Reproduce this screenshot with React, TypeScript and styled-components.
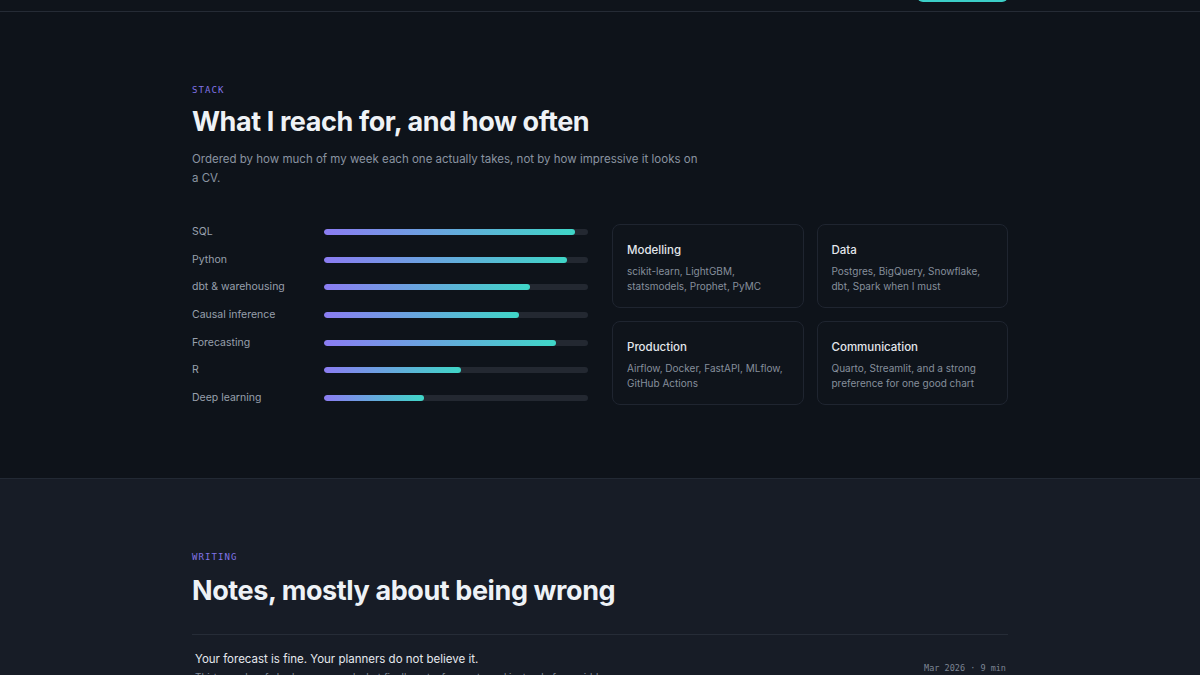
import { FC } from 'react'
import styled, { createGlobalStyle } from 'styled-components'

const GlobalStyle = createGlobalStyle`
  html, body {
    margin: 0;
    padding: 0;
    background: #0f141b;
  }
  body {
    font-family: 'Inter', 'Noto Sans', sans-serif;
    color: #e8ecf1;
    -webkit-font-smoothing: antialiased;
  }
  * {
    box-sizing: border-box;
  }
`

interface Skill {
  name: string
  level: number
}

interface Group {
  title: string
  tools: string
}

const skills: Skill[] = [
  { name: 'SQL', level: 95 },
  { name: 'Python', level: 92 },
  { name: 'dbt & warehousing', level: 78 },
  { name: 'Causal inference', level: 74 },
  { name: 'Forecasting', level: 88 },
  { name: 'R', level: 52 },
  { name: 'Deep learning', level: 38 }
]

const groups: Group[] = [
  { title: 'Modelling', tools: 'scikit-learn, LightGBM, statsmodels, Prophet, PyMC' },
  { title: 'Data', tools: 'Postgres, BigQuery, Snowflake, dbt, Spark when I must' },
  { title: 'Production', tools: 'Airflow, Docker, FastAPI, MLflow, GitHub Actions' },
  { title: 'Communication', tools: 'Quarto, Streamlit, and a strong preference for one good chart' }
]

const App: FC = () => {
  return (
    <>
      <GlobalStyle />
      <TopBar>
        <Container>
          <NavInner>
            <CtaButton>Get in touch</CtaButton>
          </NavInner>
        </Container>
      </TopBar>

      <Section $tone="dark">
        <Container>
          <Eyebrow>STACK</Eyebrow>
          <Heading $gap={9}>What I reach for, and how often</Heading>
          <Lead>
            Ordered by how much of my week each one actually takes, not by how impressive it looks on a CV.
          </Lead>

          <StackGrid>
            <SkillList>
              {skills.map((s) => (
                <SkillRow key={s.name}>
                  <SkillName>{s.name}</SkillName>
                  <Track>
                    <Fill style={{ width: `${s.level}%` }} />
                  </Track>
                </SkillRow>
              ))}
            </SkillList>

            <CardGrid>
              {groups.map((g) => (
                <Card key={g.title}>
                  <CardTitle>{g.title}</CardTitle>
                  <CardText>{g.tools}</CardText>
                </Card>
              ))}
            </CardGrid>
          </StackGrid>
        </Container>
      </Section>

      <Section $tone="light">
        <Container>
          <Eyebrow>WRITING</Eyebrow>
          <Heading $gap={11}>Notes, mostly about being wrong</Heading>
          <PostList>
            <Post>
              <PostBody>
                <PostTitle>Your forecast is fine. Your planners do not believe it.</PostTitle>
                <PostExcerpt>
                  Thirty weeks of shadow runs, and what finally got a forecast used instead of overridden.
                </PostExcerpt>
              </PostBody>
              <PostMeta>Mar 2026 · 9 min</PostMeta>
            </Post>
          </PostList>
        </Container>
      </Section>
    </>
  )
}

const Container = styled.div`
  width: 816px;
  margin: 0 auto;
`

const TopBar = styled.header`
  height: 12px;
  overflow: hidden;
  background: #0f141b;
  border-bottom: 1px solid #252b35;
`

const NavInner = styled.div`
  height: 11px;
  display: flex;
  justify-content: flex-end;
  align-items: flex-end;
`

const CtaButton = styled.button`
  flex-shrink: 0;
  width: 91px;
  height: 32px;
  margin-bottom: 9px;
  border: none;
  border-radius: 6px;
  background: #3ccfc8;
  color: #0f141b;
  font-family: 'Inter', sans-serif;
  font-size: 12px;
  font-weight: 600;
`

const Section = styled.section<{ $tone: 'dark' | 'light' }>`
  background: ${(p) => (p.$tone === 'dark' ? '#0e131a' : '#171c26')};
  padding: ${(p) => (p.$tone === 'dark' ? '72px 0 73px' : '72px 0 0')};
  border-bottom: ${(p) => (p.$tone === 'dark' ? '1px solid #222934' : 'none')};
`

const Eyebrow = styled.div`
  font-family: 'DejaVu Sans Mono', 'Liberation Mono', monospace;
  font-size: 9px;
  line-height: 12px;
  letter-spacing: 0.12em;
  color: #8174e6;
`

const Heading = styled.h2<{ $gap: number }>`
  margin: ${(p) => p.$gap}px 0 0;
  font-size: 27px;
  line-height: 34px;
  font-weight: 700;
  letter-spacing: -0.015em;
  color: #eef2f6;
`

const Lead = styled.p`
  margin: 11px 0 0;
  max-width: 510px;
  font-size: 11.5px;
  line-height: 19px;
  color: #8a93a1;
`

const StackGrid = styled.div`
  display: grid;
  grid-template-columns: 1fr 1fr;
  gap: 24px;
  margin-top: 36px;
`

const SkillList = styled.div`
  display: flex;
  flex-direction: column;
  gap: 13.7px;
  padding-top: 1px;
`

const SkillRow = styled.div`
  height: 14px;
  display: grid;
  grid-template-columns: 132px 1fr;
  align-items: center;
`

const SkillName = styled.span`
  font-size: 10.5px;
  line-height: 14px;
  color: #98a0ad;
`

const Track = styled.div`
  height: 6px;
  border-radius: 3px;
  background: #232831;
  overflow: hidden;
`

const Fill = styled.div`
  height: 100%;
  border-radius: 3px;
  background: linear-gradient(90deg, #8b7cf2 0%, #3fd6c7 100%);
`

const CardGrid = styled.div`
  display: grid;
  grid-template-columns: 1fr 1fr;
  grid-auto-rows: 84px;
  gap: 13px;
`

const Card = styled.div`
  padding: 16px 14px 14px;
  border: 1px solid #1f2530;
  border-radius: 8px;
  background: #0f141b;
`

const CardTitle = styled.div`
  font-size: 11.5px;
  line-height: 18px;
  font-weight: 500;
  color: #e3e7ec;
`

const CardText = styled.div`
  margin-top: 5px;
  font-size: 10px;
  line-height: 15px;
  color: #868f9c;
`

const PostList = styled.div`
  margin-top: 26px;
  border-top: 1px solid #262c37;
`

const Post = styled.article`
  display: flex;
  justify-content: space-between;
  align-items: flex-start;
  padding: 15px 2px 0 3px;
`

const PostBody = styled.div`
  display: flex;
  flex-direction: column;
`

const PostTitle = styled.div`
  font-size: 11.5px;
  line-height: 18px;
  color: #e6e9ee;
`

const PostExcerpt = styled.div`
  margin-top: 1px;
  font-size: 10px;
  line-height: 16px;
  color: #7f8897;
`

const PostMeta = styled.div`
  margin-top: 12px;
  font-family: 'DejaVu Sans Mono', 'Liberation Mono', monospace;
  font-size: 8.5px;
  line-height: 12px;
  color: #7d8594;
  white-space: nowrap;
`

export default App
